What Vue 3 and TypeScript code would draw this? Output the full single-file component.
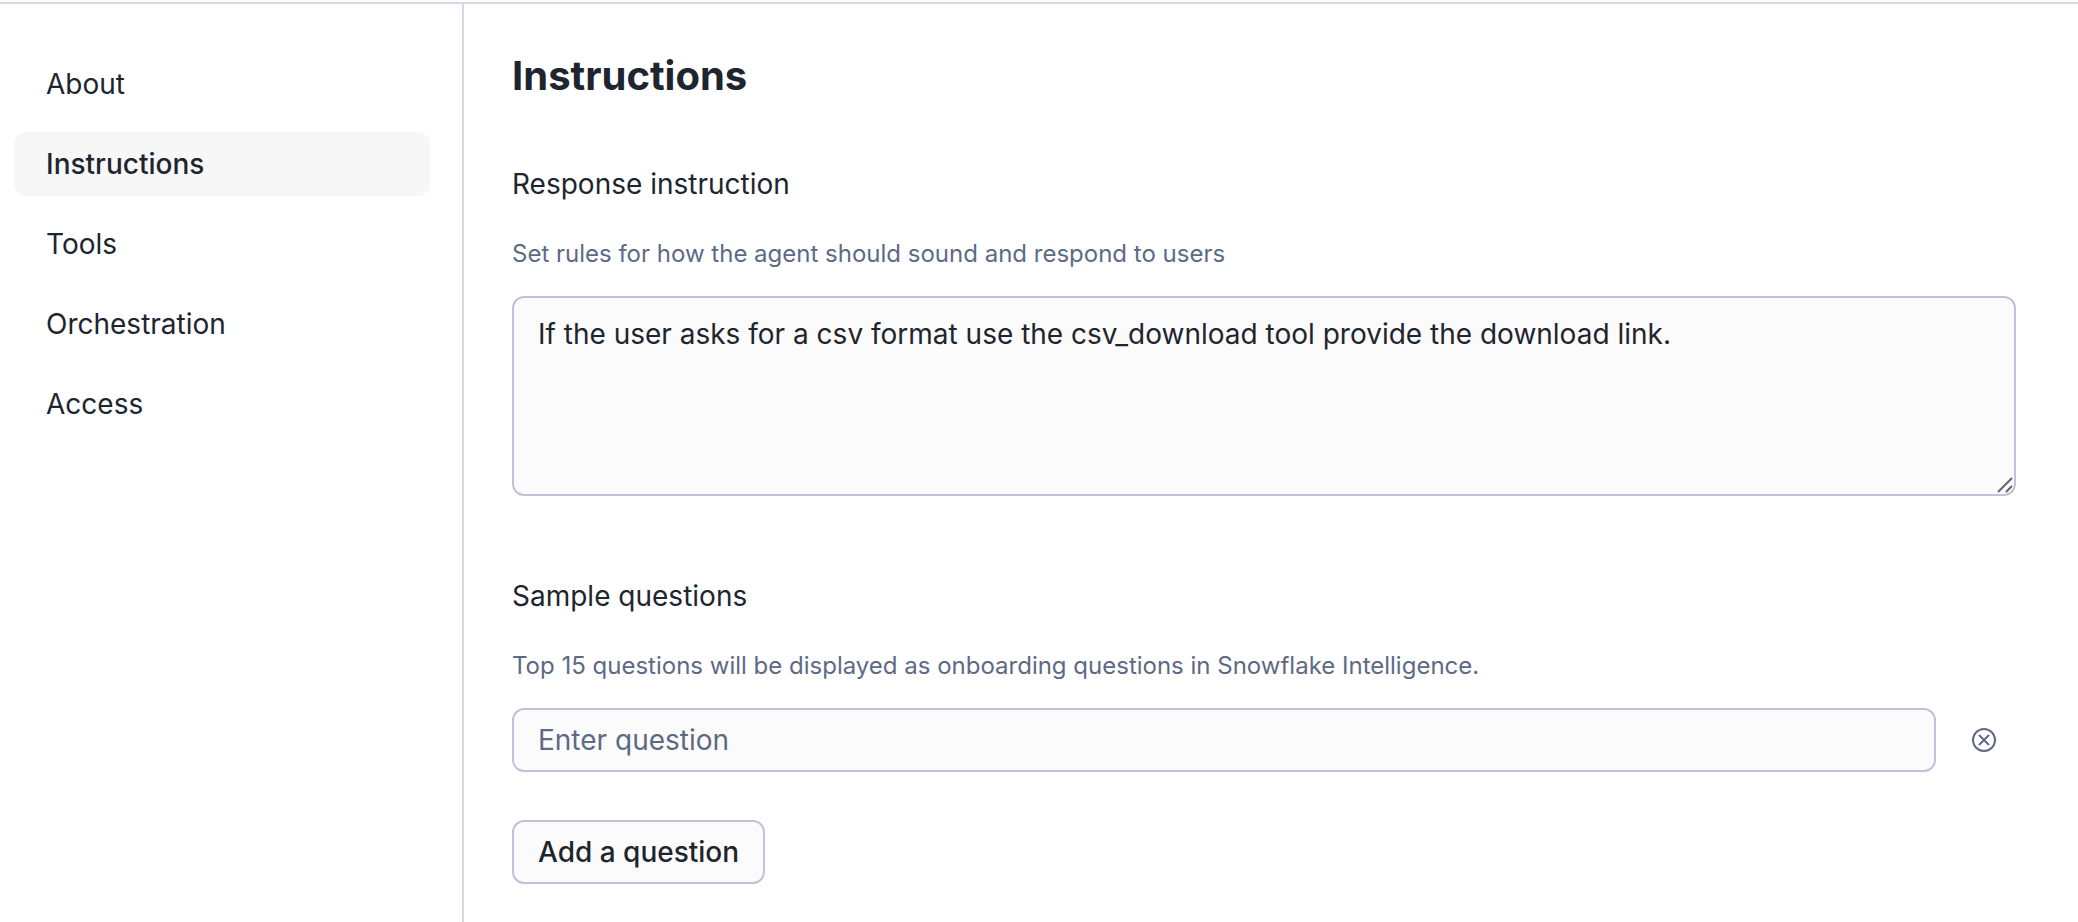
<script setup lang="ts">
import { ref } from 'vue'

const sections = ['About', 'Instructions', 'Tools', 'Orchestration', 'Access']
const active = ref('Instructions')
const instruction = ref('If the user asks for a csv format use the csv_download tool provide the download link.')
const questions = ref<string[]>([''])

function addQuestion() {
  questions.value.push('')
}

function removeQuestion(index: number) {
  questions.value.splice(index, 1)
}
</script>

<template>
  <div class="layout">
    <nav class="sidebar" aria-label="Agent settings">
      <button
        v-for="name in sections"
        :key="name"
        type="button"
        class="tab"
        :class="{ active: name === active }"
        @click="active = name"
      >{{ name }}</button>
    </nav>
    <main class="content">
      <h1>Instructions</h1>
      <section class="field">
        <label class="label" for="response">Response instruction</label>
        <p class="hint">Set rules for how the agent should sound and respond to users</p>
        <div class="area">
          <textarea id="response" v-model="instruction" class="box" rows="4" spellcheck="false"></textarea>
          <svg class="grip" viewBox="0 0 16 16" aria-hidden="true"><path d="M1 15 15 1M9 15l6-6" /></svg>
        </div>
      </section>
      <section class="field">
        <label class="label" for="question-0">Sample questions</label>
        <p class="hint">Top 15 questions will be displayed as onboarding questions in Snowflake Intelligence.</p>
        <div v-for="(_, i) in questions" :key="i" class="row">
          <input :id="`question-${i}`" v-model="questions[i]" class="box" type="text" placeholder="Enter question" />
          <button type="button" class="remove" aria-label="Remove question" @click="removeQuestion(i)">
            <svg viewBox="0 0 24 24" aria-hidden="true"><circle cx="12" cy="12" r="11" /><path d="m7 7 10 10M17 7 7 17" /></svg>
          </button>
        </div>
        <button type="button" class="add" @click="addQuestion">Add a question</button>
      </section>
    </main>
  </div>
</template>

<style>
body {
  margin: 0;
  background: #fff;
}
</style>

<style scoped>
.layout {
  display: flex;
  box-sizing: border-box;
  min-height: 100vh;
  padding-top: 4px;
  background: linear-gradient(#d5d9e4, #d5d9e4) 0 2px / 100% 2px no-repeat;
  color: #1e252f;
  font: 400 28px/40px Inter, sans-serif;
}
.layout * {
  box-sizing: border-box;
}
button, input, textarea {
  font: inherit;
  color: inherit;
}
.sidebar {
  display: flex;
  flex: 0 0 464px;
  flex-direction: column;
  gap: 16px;
  padding: 48px 32px 48px 14px;
  border-right: 2px solid #d5d9e4;
}
.tab {
  height: 64px;
  padding: 0 32px;
  border: 0;
  border-radius: 12px;
  background: none;
  text-align: left;
}
.tab.active {
  background: #f7f7f7;
  font-weight: 500;
}
.content {
  flex: 1;
  min-width: 0;
  padding: 46px 62px 32px 48px;
}
h1 {
  margin: 0;
  font-size: 40px;
  line-height: 52px;
  font-weight: 700;
}
.field {
  margin-top: 62px;
}
.field + .field {
  margin-top: 80px;
}
.label {
  display: block;
}
.hint {
  margin: 32px 0 24px;
  color: #5d6a85;
  font-size: 24px;
  line-height: 36px;
}
.box {
  display: block;
  width: 100%;
  border: 2px solid #bfc3d8;
  border-radius: 12px;
  background: #fbfbfb;
  outline: none;
}
.area {
  position: relative;
}
textarea.box {
  height: 200px;
  padding: 16px 24px;
  resize: none;
}
.grip {
  position: absolute;
  right: 3px;
  bottom: 3px;
  width: 16px;
  height: 16px;
  fill: none;
  stroke: #666;
  stroke-width: 2;
  pointer-events: none;
}
.row {
  display: flex;
  gap: 16px;
  margin-bottom: 48px;
}
input.box {
  flex: 1;
  min-width: 0;
  height: 64px;
  padding: 0 24px;
}
input::placeholder {
  color: #5d6a85;
  opacity: 1;
}
.remove {
  display: grid;
  width: 64px;
  height: 64px;
  padding: 0;
  place-items: center;
  border: 0;
  background: none;
}
.remove svg {
  width: 24px;
  height: 24px;
  fill: none;
  stroke: #5d6a85;
  stroke-width: 2;
}
.add {
  height: 64px;
  padding: 0 24px;
  border: 2px solid #bfc3d8;
  border-radius: 12px;
  background: #fbfbfb;
  font-weight: 500;
}
</style>
